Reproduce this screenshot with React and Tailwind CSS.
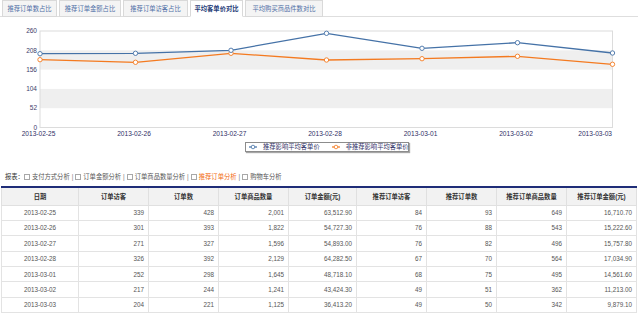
import React from 'react';

const font = { fontFamily: '"Liberation Sans", "Noto Sans CJK SC", sans-serif' };

const tabs = [
    { label: '推荐订单数占比', w: 'w-[55px]' },
    { label: '推荐订单金额占比', w: 'w-[62px]' },
    { label: '推荐订单访客占比', w: 'w-[65px]' },
    { label: '平均客单价对比', w: 'w-[53px]', active: true },
    { label: '平均购买商品件数对比', w: 'w-[78px]' },
];

const dates = ['2013-02-25', '2013-02-26', '2013-02-27', '2013-02-28', '2013-03-01', '2013-03-02', '2013-03-03'];
const xs = [40, 135.5, 231, 326.5, 422, 517.5, 612.5];
const blueY = [52.7, 52.3, 49.3, 32.3, 47.3, 41.7, 52];
const orangeY = [58.7, 61.3, 52.3, 59, 57.7, 55.3, 63.3];
const ticks = [
    { v: '260', y: 30 },
    { v: '208', y: 49.3 },
    { v: '156', y: 68.6 },
    { v: '104', y: 87.9 },
    { v: '52', y: 107.2 },
    { v: '0', y: 126.5 },
];

const rows = [
    ['2013-02-25', '339', '428', '2,001', '63,512.90', '84', '93', '649', '16,710.70'],
    ['2013-02-26', '301', '393', '1,822', '54,727.30', '76', '88', '543', '15,222.60'],
    ['2013-02-27', '271', '327', '1,596', '54,893.00', '76', '82', '496', '15,757.80'],
    ['2013-02-28', '326', '392', '2,129', '64,282.50', '67', '70', '564', '17,034.90'],
    ['2013-03-01', '252', '298', '1,645', '48,718.10', '68', '75', '495', '14,561.60'],
    ['2013-03-02', '217', '244', '1,241', '43,424.30', '49', '51', '362', '11,213.00'],
    ['2013-03-03', '204', '221', '1,125', '36,413.20', '49', '50', '342', '9,879.10'],
];

const headers = ['日期', '订单访客', '订单数', '订单商品数量', '订单金额(元)', '推荐订单访客', '推荐订单数', '推荐订单商品数量', '推荐订单金额(元)'];
const colW = ['w-[77px]', 'w-[70px]', 'w-[70px]', 'w-[70px]', 'w-[68px]', 'w-[70px]', 'w-[70px]', 'w-[70px]', 'w-[70px]'];

const reports = ['支付方式分析', '订单金额分析', '订单商品数量分析', '推荐订单分析', '购物车分析'];

const pts = (ys) => xs.map((x, i) => `${x},${ys[i]}`).join(' ');

const Chart = () => (
    <svg width="638" height="124" viewBox="0 16 638 124" className="block">
        <rect x="40" y="49.3" width="572.5" height="19.3" fill="#efefef" />
        <rect x="40" y="87.9" width="572.5" height="19.3" fill="#efefef" />
        <rect x="40" y="30" width="572.5" height="96.5" fill="none" stroke="#dcdcdc" strokeWidth="1" />
        {ticks.map(t => (
            <text key={t.v} x="37" y={t.y + 2.2} fontSize="6.5" textAnchor="end" fill="#3d3d6b" style={font}>{t.v}</text>
        ))}
        {dates.map((d, i) => (
            <text key={d} x={i === 6 ? 612 : xs[i] - 1.5} y="135" fontSize="6.6" textAnchor={i === 6 ? 'end' : 'middle'} fill="#2f2f66" style={font}>{d}</text>
        ))}
        <polyline points={pts(orangeY)} fill="none" stroke="#f47a20" strokeWidth="1.3" />
        <polyline points={pts(blueY)} fill="none" stroke="#4572a7" strokeWidth="1.3" />
        {xs.map((x, i) => (
            <circle key={'o' + i} cx={x} cy={orangeY[i]} r="2.2" fill="#fff" stroke="#f47a20" strokeWidth="0.9" />
        ))}
        {xs.map((x, i) => (
            <circle key={'b' + i} cx={x} cy={blueY[i]} r="2.2" fill="#fff" stroke="#4572a7" strokeWidth="0.9" />
        ))}
    </svg>
);

const LegendMark = ({ color }) => (
    <svg width="8" height="6" className="shrink-0">
        <line x1="0" y1="3" x2="8" y2="3" stroke={color} strokeWidth="1.2" />
        <circle cx="4" cy="3" r="1.8" fill="#fff" stroke={color} strokeWidth="0.8" />
    </svg>
);

const App = () => {
    return (
        <div className="w-[638px] h-[313px] overflow-hidden bg-white" style={font}>
            <div className="flex gap-[2px] pl-[2px] h-[17px] border-b border-[#dedede]">
                {tabs.map(t => (
                    <div
                        key={t.label}
                        className={`${t.w} h-[17px] flex items-center justify-center whitespace-nowrap text-[6.3px] border border-[#d9d9d9] ${t.active ? 'bg-white border-b-white text-[#1e3c78] font-bold' : 'bg-[#f4f4f4] text-[#4f6fa6]'}`}
                    >
                        {t.label}
                    </div>
                ))}
            </div>

            <Chart />

            <div className="ml-[245px] mt-px w-[164px] h-[10px] border border-[#8c8c8c] shadow-[1px_1px_1px_rgba(0,0,0,0.35)] flex items-center gap-[12px] pl-[3px] whitespace-nowrap text-[6.3px] text-[#2f2f66]">
                <div className="flex items-center gap-[6px] shrink-0">
                    <LegendMark color="#4572a7" />
                    <span>推荐影响平均客单价</span>
                </div>
                <div className="flex items-center gap-[6px] shrink-0">
                    <LegendMark color="#f47a20" />
                    <span>非推荐影响平均客单价</span>
                </div>
            </div>

            <div className="flex items-center h-[11px] mt-[19px] pl-[5px] whitespace-nowrap text-[6.3px] text-[#555]">
                <span className="text-[#333]">报表：</span>
                {reports.map((r, i) => (
                    <React.Fragment key={r}>
                        {i > 0 && <span className="mx-[2px] text-[#777]">|</span>}
                        <span className="w-[6px] h-[6px] border border-[#a8a8a8] bg-white mr-[2px]"></span>
                        <span className={r === '推荐订单分析' ? 'text-[#f26a10]' : 'text-[#555]'}>{r}</span>
                    </React.Fragment>
                ))}
            </div>

            <table className="mt-[4px] ml-px table-fixed border-collapse border-t-2 border-t-[#1f2d78] text-[6.3px]">
                <colgroup>
                    {colW.map((w, i) => <col key={i} className={w} />)}
                </colgroup>
                <thead>
                    <tr className="h-[18px] bg-[#f2f2f2]">
                        {headers.map(h => (
                            <th key={h} className="border border-[#e0e0e0] border-t-0 font-bold text-[#333] text-center">{h}</th>
                        ))}
                    </tr>
                </thead>
                <tbody>
                    {rows.map(r => (
                        <tr key={r[0]} className="h-[15.4px]">
                            {r.map((c, j) => (
                                <td key={j} className={`border border-[#e3e3e3] text-[#555] p-0 ${j === 0 ? 'text-center' : 'text-right pr-[4px]'}`}>{c}</td>
                            ))}
                        </tr>
                    ))}
                </tbody>
            </table>
        </div>
    );
};

export default App;
